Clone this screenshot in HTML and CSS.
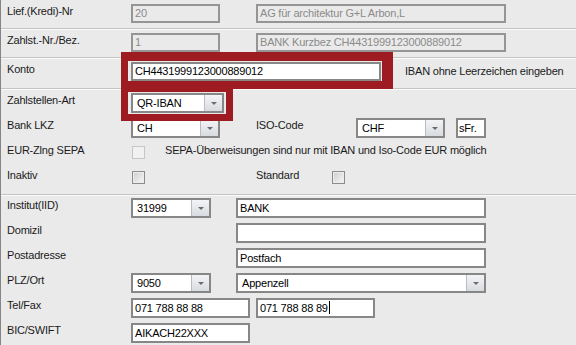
FILE: index.html
```html
<!DOCTYPE html>
<html lang="de">
<head>
    <meta charset="UTF-8">
    <meta name="viewport" content="width=device-width, initial-scale=1.0">
    <title>Zahlstelle</title>
    <link rel="stylesheet" href="styles.css">
</head>
<body>
    <div class="window">
        <!-- Kopf: Lieferant und Zahlstelle -->
        <div class="row sep h29">
            <div class="label">Lief.(Kredi)-Nr</div>
            <div class="field off low num">20</div>
            <div class="field off low wide gap36">AG für architektur G+L Arbon,L</div>
        </div>
        <div class="row sep h29">
            <div class="label">Zahlst.-Nr./Bez.</div>
            <div class="field off low num">1</div>
            <div class="field off low wide gap36">BANK Kurzbez CH4431999123000889012</div>
        </div>
        <div class="row sep h31">
            <div class="label">Konto</div>
            <div class="field low wide">CH4431999123000889012</div>
            <div class="note">IBAN ohne Leerzeichen eingeben</div>
        </div>
        <div class="row">
            <div class="label">Zahlstellen-Art</div>
            <div class="field combo qr"><span class="val">QR-IBAN</span><span class="btn"></span></div>
        </div>
        <div class="row">
            <div class="label">Bank LKZ</div>
            <div class="field combo num"><span class="val">CH</span><span class="btn"></span></div>
            <div class="label iso">ISO-Code</div>
            <div class="field combo num"><span class="val">CHF</span><span class="btn"></span></div>
            <div class="field cur">sFr.</div>
        </div>
        <div class="row">
            <div class="label">EUR-Zlng SEPA</div>
            <div class="check off"></div>
            <div class="hint">SEPA-Überweisungen sind nur mit IBAN und Iso-Code EUR möglich</div>
        </div>
        <div class="row sep h31">
            <div class="label">Inaktiv</div>
            <div class="check"></div>
            <div class="label std">Standard</div>
            <div class="check"></div>
        </div>

        <!-- Bankdaten -->
        <div class="row tight">
            <div class="label">Institut(IID)</div>
            <div class="field combo iid"><span class="val">31999</span><span class="btn"></span></div>
            <div class="field wide gap25">BANK</div>
        </div>
        <div class="row tight">
            <div class="label">Domizil</div>
            <div class="field wide gap105"></div>
        </div>
        <div class="row tight">
            <div class="label">Postadresse</div>
            <div class="field wide gap105">Postfach</div>
        </div>
        <div class="row tight">
            <div class="label">PLZ/Ort</div>
            <div class="field combo iid"><span class="val">9050</span><span class="btn"></span></div>
            <div class="field combo wide gap25"><span class="val">Appenzell</span><span class="btn"></span></div>
        </div>
        <div class="row tight">
            <div class="label">Tel/Fax</div>
            <div class="field tel">071 788 88 88</div>
            <div class="field tel gap6">071 788 88 89<span class="caret"></span></div>
        </div>
        <div class="row tight">
            <div class="label">BIC/SWIFT</div>
            <div class="field tel">AIKACH22XXX</div>
        </div>

        <!-- Markierungen -->
        <div class="mark mark-konto"></div>
        <div class="mark mark-art"></div>
    </div>
</body>
</html>
```

FILE: styles.css
```css
body {
    margin: 0;
    font-family: "Liberation Sans", Arial, sans-serif;
    font-size: 11px;
    letter-spacing: -0.2px;
    color: #1a1a1a;
    background-color: #eaeaea;
}

.window {
    position: relative;
    width: 575px;
    height: 345px;
    border-left: 1px solid #858585;
    overflow: hidden;
}

.row {
    display: flex;
    align-items: flex-start;
    height: 25px;
    padding-top: 4px;
    box-sizing: border-box;
}

.row.tight {
    padding-top: 3px;
}

.row.h29 {
    height: 29px;
}

.row.h31 {
    height: 31px;
}

.sep {
    border-bottom: 1px solid #c4c4c4;
    box-shadow: 0 1px 0 #fafafa;
}

.label {
    flex: none;
    width: 130px;
    padding: 1px 0 0 6px;
    box-sizing: border-box;
    line-height: 13px;
    white-space: nowrap;
}

.label.iso {
    width: 100px;
    margin-left: 36px;
    padding-left: 0;
}

.label.std {
    width: 75px;
    margin-left: 111px;
    padding-left: 0;
}

.note {
    margin-left: 24px;
    padding-top: 3px;
    line-height: 13px;
    white-space: nowrap;
}

.hint {
    margin-left: 20px;
    padding-top: 1px;
    line-height: 13px;
    white-space: nowrap;
}

/* Eingabefelder */
.field {
    flex: none;
    height: 20px;
    box-sizing: border-box;
    border: 2px solid #878787;
    background: #fff;
    color: #000;
    line-height: 16px;
    padding: 0 2px;
    white-space: nowrap;
    overflow: hidden;
}

.field.low {
    height: 19px;
    line-height: 15px;
}

.field.off {
    background: #eaeaea;
    color: #8b8b8b;
    border-color: #959595;
}

.num { width: 89px; }
.wide { width: 250px; }
.qr { width: 93px; }
.iid { width: 80px; }
.tel { width: 119px; }

.cur {
    width: 30px;
    margin-left: 11px;
    padding-left: 1px;
}

.gap36 { margin-left: 36px; }
.gap25 { margin-left: 25px; }
.gap105 { margin-left: 105px; }
.gap6 { margin-left: 6px; }

.combo {
    display: flex;
    padding: 0;
}

.combo .val {
    flex: 1;
    padding-left: 4px;
    overflow: hidden;
}

.combo .btn {
    flex: none;
    width: 17px;
    border-left: 1px solid #b9bcc1;
    background: linear-gradient(#f3f4f6, #d8dbe0);
    display: flex;
    align-items: center;
    justify-content: center;
}

.combo .btn::after {
    content: "";
    border-left: 3px solid transparent;
    border-right: 3px solid transparent;
    border-top: 3px solid #6c6c6c;
}

.caret {
    display: inline-block;
    width: 1px;
    height: 13px;
    margin-left: 1px;
    background: #000;
    vertical-align: -2px;
}

/* Checkboxen */
.check {
    flex: none;
    width: 13px;
    height: 13px;
    margin: 3px 0 0 1px;
    box-sizing: border-box;
    border: 1px solid #8c8c8c;
    background: linear-gradient(135deg, #cdcdcd, #f8f8f8);
    box-shadow: inset 0 0 0 1px #ececec;
}

.check.off {
    border-color: #c6c6c6;
    background: #f1f1f1;
    box-shadow: none;
}

/* rote Markierung */
.mark {
    position: absolute;
    box-sizing: border-box;
    border: 7px solid #9e1b22;
}

.mark-konto {
    left: 120px;
    top: 52px;
    width: 272px;
    height: 37px;
    border-width: 9px 11px 8px 7px;
}

.mark-art {
    left: 120px;
    top: 85px;
    width: 112px;
    height: 36px;
}
```
